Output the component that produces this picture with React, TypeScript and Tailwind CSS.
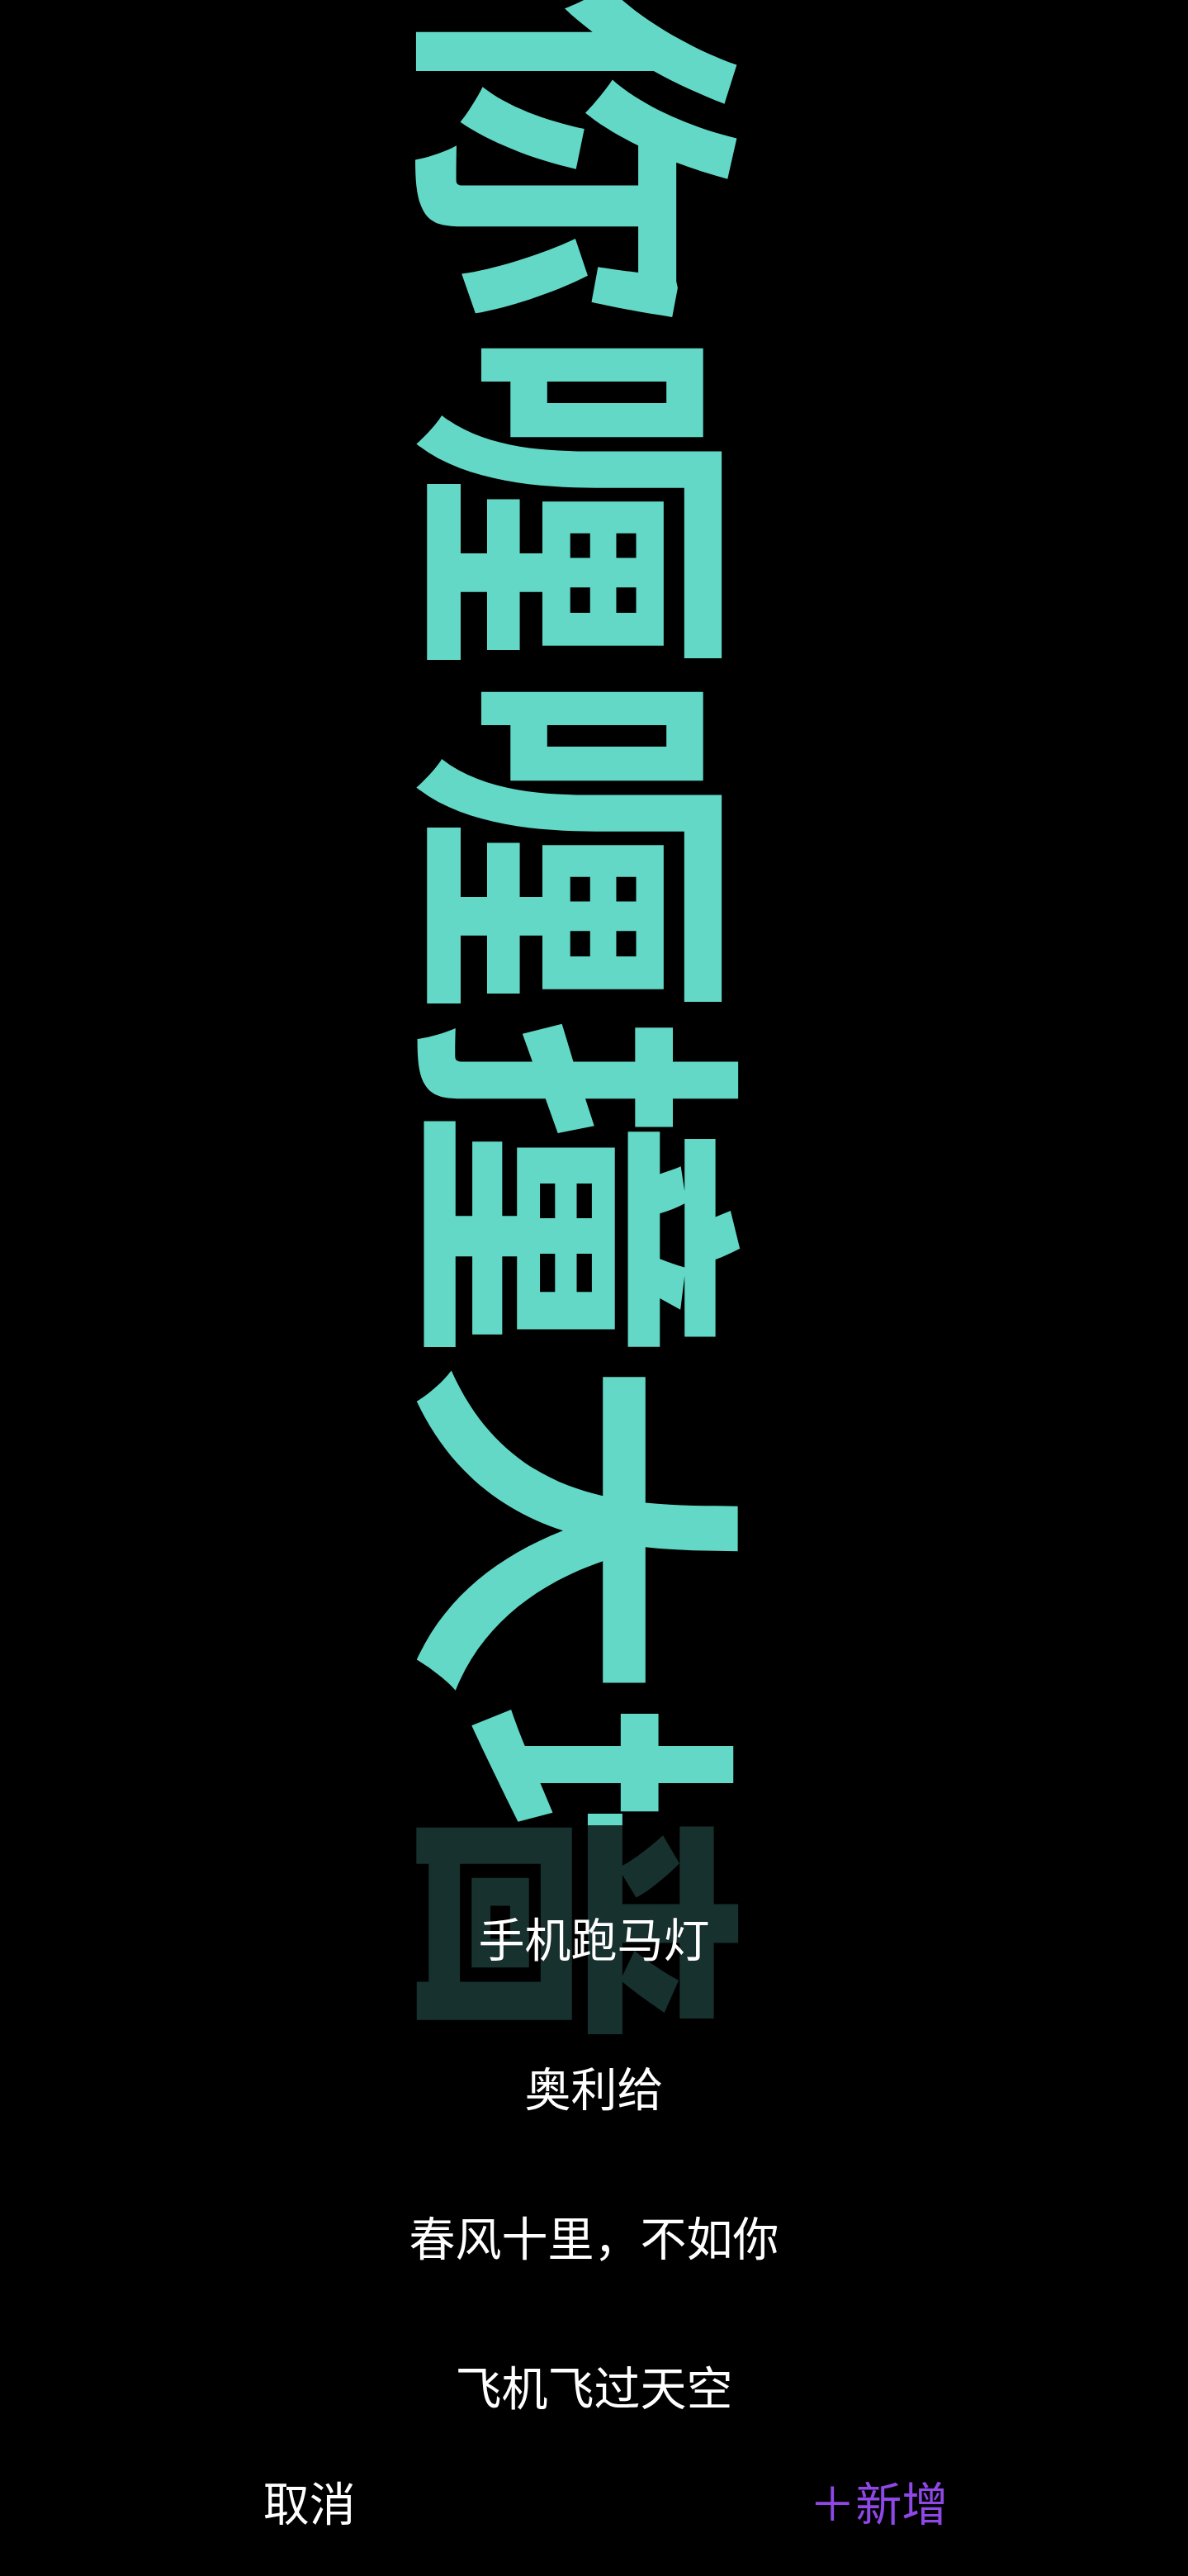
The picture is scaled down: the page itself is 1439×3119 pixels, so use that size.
const items = ['手机跑马灯', '奥利给', '春风十里，不如你', '飞机飞过天空'];

export default function App() {
  return (
    <div className="relative h-[3119px] w-full overflow-hidden bg-black font-['Noto_Sans_CJK_SC',sans-serif]">
      {/* marquee text, rotated via vertical writing mode */}
      <div className="flex justify-center -mt-[20px] pl-[4px]">
        <div className="[writing-mode:vertical-rl] [text-orientation:sideways] whitespace-nowrap text-[416px] leading-none font-bold text-[#63d8c6]">
          你喱喱撞大墙
        </div>
      </div>

      {/* bottom sheet */}
      <div className="absolute inset-x-0 bottom-0 flex h-[909px] flex-col bg-black/[0.77]">
        <ul className="mt-[44px] flex flex-col">
          {items.map((t) => (
            <li key={t} className="flex h-[181px] items-center justify-center text-[56px] text-white">
              {t}
            </li>
          ))}
        </ul>
        <div className="flex h-[100px] px-[30px]">
          <button className="flex-1 text-[56px] text-white">取消</button>
          <button className="flex-1 text-[56px] text-[#8f47e6]">＋新增</button>
        </div>
      </div>
    </div>
  );
}
